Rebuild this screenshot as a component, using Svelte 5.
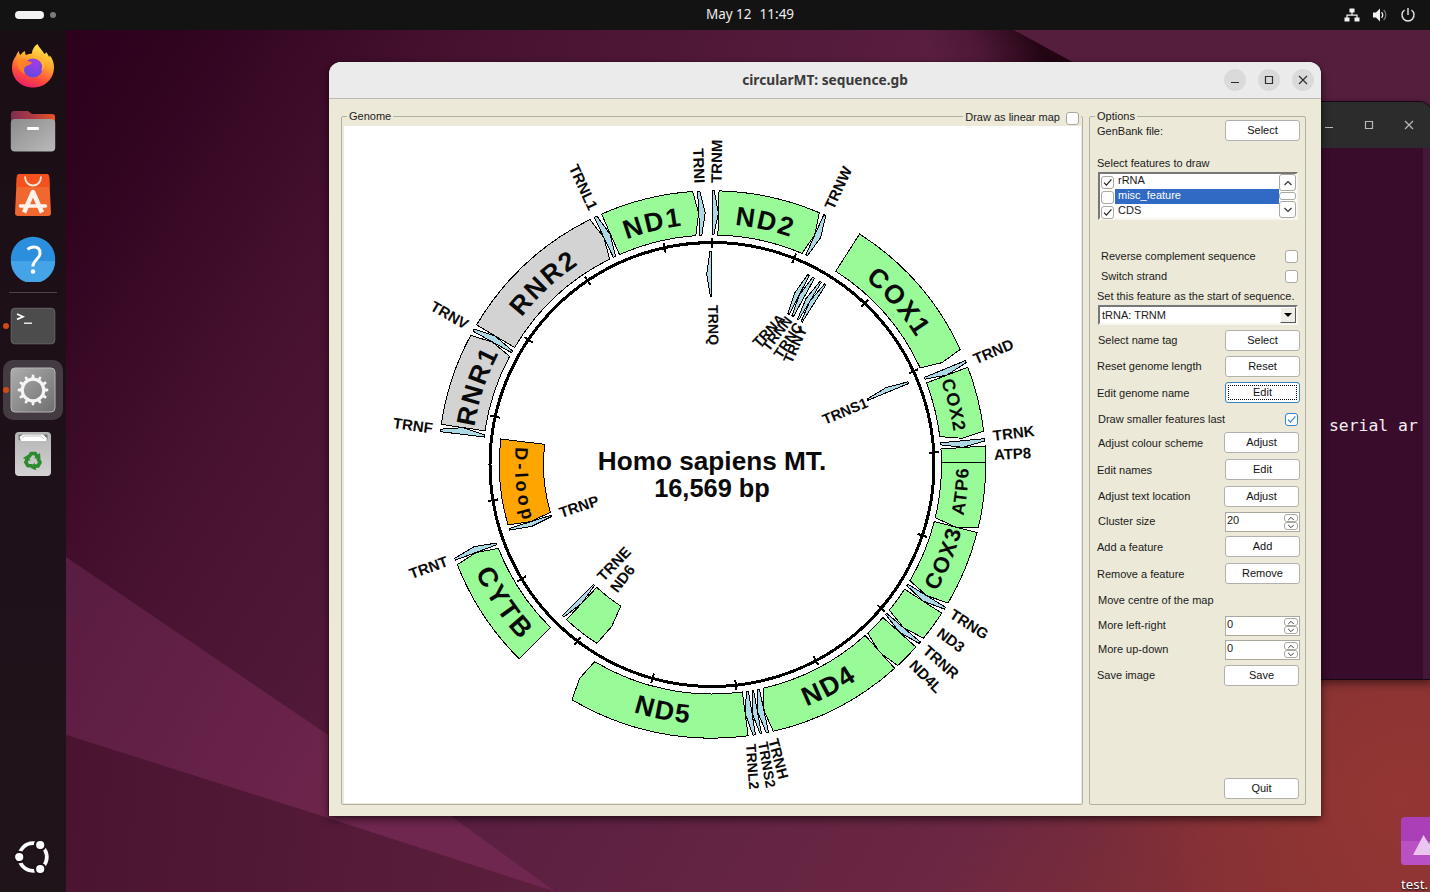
<script>
  const CX = 712, CY = 464.5, TOTAL = 16569, ORIGIN = 4402;
  const TRNA = '#add8e6', CDS = '#98fb98', RRNA = '#d3d3d3', DLOOP = '#ffa500';

  // name, start, end, strand (1 outer / -1 inner), fill, label size (0 = outside label), label overrides
  const features = [
    ['TRNF', 577, 647, 1, TRNA, 0],
    ['RNR1', 648, 1601, 1, RRNA, 26.5],
    ['TRNV', 1602, 1670, 1, TRNA, 0],
    ['RNR2', 1671, 3229, 1, RRNA, 26.5],
    ['TRNL1', 3230, 3304, 1, TRNA, 0],
    ['ND1', 3307, 4262, 1, CDS, 26.5],
    ['TRNI', 4263, 4331, 1, TRNA, 0],
    ['TRNQ', 4329, 4400, -1, TRNA, 0, { x: 713, y: 305, r: 89, f: 14.2 }],
    ['TRNM', 4402, 4469, 1, TRNA, 0, { x: 716.5, y: 183, r: -89, f: 15 }],
    ['ND2', 4470, 5511, 1, CDS, 26.5],
    ['TRNW', 5512, 5579, 1, TRNA, 0],
    ['TRNA', 5587, 5655, -1, TRNA, 0, { x: 782, y: 316, r: -47, f: 14.2 }],
    ['TRNN', 5657, 5729, -1, TRNA, 0, { x: 789, y: 318, r: -52, f: 14.2 }],
    ['TRNC', 5761, 5826, -1, TRNA, 0, { x: 799, y: 324, r: -56, f: 14.2 }],
    ['TRNY', 5826, 5891, -1, TRNA, 0, { x: 803, y: 327, r: -66, f: 14.2 }],
    ['COX1', 5904, 7445, 1, CDS, 26.5],
    ['TRNS1', 7446, 7514, -1, TRNA, 0, { x: 867, y: 402, r: -22.5, f: 14.5 }],
    ['TRND', 7518, 7585, 1, TRNA, 0, { x: 974, y: 360, r: -23, f: 15.2 }],
    ['COX2', 7586, 8269, 1, CDS, 18],
    ['TRNK', 8295, 8364, 1, TRNA, 0, { x: 993, y: 436, r: -7, f: 15 }],
    ['ATP8', 8366, 8572, 1, CDS, 0, { x: 994, y: 455, r: -3, f: 15 }],
    ['ATP6', 8527, 9207, 1, CDS, 18],
    ['COX3', 9207, 9990, 1, CDS, 22],
    ['TRNG', 9991, 10058, 1, TRNA, 0],
    ['ND3', 10059, 10404, 1, CDS, 0],
    ['TRNR', 10405, 10469, 1, TRNA, 0],
    ['ND4L', 10470, 10766, 1, CDS, 0],
    ['ND4', 10760, 12137, 1, CDS, 26.5],
    ['TRNH', 12138, 12206, 1, TRNA, 0, { x: 773, y: 739, r: 75, f: 14.8 }],
    ['TRNS2', 12207, 12265, 1, TRNA, 0, { x: 763, y: 742, r: 80, f: 14.1 }],
    ['TRNL2', 12266, 12336, 1, TRNA, 0, { x: 751, y: 744, r: 86, f: 14.1 }],
    ['ND5', 12337, 14148, 1, CDS, 26.5],
    ['ND6', 14149, 14673, -1, CDS, 0],
    ['TRNE', 14674, 14742, -1, TRNA, 0],
    ['CYTB', 14747, 15887, 1, CDS, 27],
    ['TRNT', 15888, 15953, 1, TRNA, 0],
    ['TRNP', 15956, 16023, -1, TRNA, 0],
    ['D-loop', 16024, 17145, -1, DLOOP, 18]
  ];

  const deg = (bp) => ((((bp - ORIGIN) / TOTAL) * 360) + 720) % 360;
  const pt = (r, a) => {
    const t = (a * Math.PI) / 180;
    return `${(CX + r * Math.sin(t)).toFixed(2)} ${(CY - r * Math.cos(t)).toFixed(2)}`;
  };

  const shapes = features.map(([name, s, e, strand, fill, size, over]) => {
    const a = deg(s);
    const b = a + ((e - s) / TOTAL) * 360;
    const ri = strand > 0 ? 229.5 : 168.5;
    const ro = ri + 44.2;
    const mid = (ri + ro) / 2;
    const d = 1;
    const shape = strand > 0
      ? `M${pt(ri, a)}L${pt(ro, a)}A${ro} ${ro} 0 0 1 ${pt(ro, b - d)}L${pt(mid, b)}L${pt(ri, b - d)}A${ri} ${ri} 0 0 0 ${pt(ri, a)}Z`
      : `M${pt(ri, b)}L${pt(ro, b)}A${ro} ${ro} 0 0 0 ${pt(ro, a + d)}L${pt(mid, a)}L${pt(ri, a + d)}A${ri} ${ri} 0 0 1 ${pt(ri, b)}Z`;
    const m = ((a + b) / 2) % 360;
    const flip = m > 90 && m < 270;
    const tr = (flip ? mid + size * 0.36 : mid - size * 0.36) - (name === 'D-loop' ? 0 : 1.5);
    const c = flip ? m - 0.9 : m - 0.4;
    const arc = flip
      ? `M${pt(tr, c + 40)}A${tr} ${tr} 0 0 0 ${pt(tr, c - 40)}`
      : `M${pt(tr, c - 40)}A${tr} ${tr} 0 0 1 ${pt(tr, c + 40)}`;
    const right = m < 180;
    const [lx, ly] = pt(strand > 0 ? 281.5 : 160, m).split(' ');
    const pos = over ?? { x: lx, y: ly, r: right ? m - 90 : m + 90, f: 15 };
    const anchor = right === strand > 0 ? 'start' : 'end';
    const dy = over ? 5 : !right && strand > 0 ? 6.5 : 3.5;
    return { name, fill, size, shape, arc, pos, anchor, dy };
  });

  const ticks = Array.from({ length: 17 }, (_, i) => (i * 1000 / TOTAL) * 360);

  const options = [
    { label: 'Select name tag', button: 'Select', gap: 5, dx: 1 },
    { label: 'Reset genome length', button: 'Reset', gap: 5 },
    { label: 'Edit genome name', button: 'Edit', gap: 5, focus: true, dy: 1 },
    { label: 'Draw smaller features last', check: true, gap: 6, dx: 1 },
    { label: 'Adjust colour scheme', button: 'Adjust', gap: 2, left: true, dx: 1, dy: 1 },
    { label: 'Edit names', button: 'Edit', gap: 6, dy: 1 },
    { label: 'Adjust text location', button: 'Adjust', gap: 6, left: true, dx: 1 },
    { label: 'Cluster size', spin: '20', gap: 5, dx: 1, dy: -1 },
    { label: 'Add a feature', button: 'Add', gap: 4, dy: 1 },
    { label: 'Remove a feature', button: 'Remove', gap: 6, dy: 1 },
    { label: 'Move centre of the map', gap: 6, dx: 1 },
    { label: 'More left-right', spin: '0', gap: 5, dx: 1, dy: -1 },
    { label: 'More up-down', spin: '0', gap: 4, dx: 1, dy: -1 },
    { label: 'Save image', button: 'Save', gap: 5, left: true }
  ];

  const list = [
    { name: 'rRNA', on: true },
    { name: 'misc_feature', on: false, sel: true },
    { name: 'CDS', on: true }
  ];
  const teeth = Array.from({ length: 12 }, (_, i) => i * 30);
</script>

{#snippet tick(color)}
  <svg width="13" height="13" viewBox="0 0 13 13"><path d="M3 6.6 5.4 9.2 10.4 3.4" fill="none" stroke={color} stroke-width="1.2" /></svg>
{/snippet}

{#snippet controls()}
  <svg width="14" height="14" viewBox="0 0 14 14"><path d="M3 9.5h8" /></svg>
  <svg width="14" height="14" viewBox="0 0 14 14"><path d="M3.500 3.500h7v7h-7z" /></svg>
  <svg width="14" height="14" viewBox="0 0 14 14"><path d="m3 3 8 8m0-8-8 8" /></svg>
{/snippet}

<div class="desktop">
  <svg class="wallpaper" width="1430" height="892" viewBox="0 0 1430 892">
    <defs>
      <linearGradient id="base" x1="0" y1="0" x2="1430" y2="892" gradientUnits="userSpaceOnUse">
        <stop offset="0" stop-color="#2a001a" />
        <stop offset=".1" stop-color="#30031f" />
        <stop offset=".25" stop-color="#47122f" />
        <stop offset=".5" stop-color="#5b1f41" />
        <stop offset=".75" stop-color="#6b2743" />
        <stop offset=".9" stop-color="#86312f" />
        <stop offset="1" stop-color="#9a3b2e" />
      </linearGradient>
      <linearGradient id="facet" x1="66" y1="560" x2="480" y2="800" gradientUnits="userSpaceOnUse">
        <stop offset="0" stop-color="#5a1c42" />
        <stop offset="1" stop-color="#74284f" />
      </linearGradient>
      <linearGradient id="low" x1="66" y1="800" x2="900" y2="892" gradientUnits="userSpaceOnUse">
        <stop offset="0" stop-color="#4a1431" />
        <stop offset="1" stop-color="#692743" />
      </linearGradient>
      <linearGradient id="fold" x1="940" y1="75" x2="1035" y2="35" gradientUnits="userSpaceOnUse">
        <stop offset="0" stop-color="#2a0619" stop-opacity="0" />
        <stop offset=".45" stop-color="#2a0619" stop-opacity=".3" />
        <stop offset="1" stop-color="#230514" />
      </linearGradient>
      <radialGradient id="warm" cx="1400" cy="800" r="380" gradientUnits="userSpaceOnUse">
        <stop offset="0" stop-color="#943633" />
        <stop offset=".5" stop-color="#893235" stop-opacity=".75" />
        <stop offset="1" stop-color="#6b2743" stop-opacity="0" />
      </radialGradient>
    </defs>
    <rect width="1430" height="892" fill="url(#base)" />
    <path d="M900 30H1014L1074 62H900Z" fill="url(#fold)" />
    <path d="M1014 30H1430V110H1160Z" fill="#561e3d" />
    <path d="M66 557 328 735V818L66 735Z" fill="url(#facet)" />
    <path d="M66 735 328 818 556 892H66Z" fill="url(#low)" />
    <path d="M328 816H451L556 892 328 818Z" fill="#6f264f" />
    <rect width="1430" height="892" fill="url(#warm)" />
  </svg>

  <header class="panel">
    <div class="spaces"><i class="pill"></i><i class="dot"></i></div>
    <div class="clock"><span>May 12</span><span>11:49</span></div>
    <div class="status">
      <svg width="16" height="16" viewBox="0 0 16 16"><path d="M5.500 1.500h5v4h-5zM.5 10.500h5v4h-5zM10.500 10.500h5v4h-5z" fill="#f2f2f2" /><path d="M8 5v3M3 11V8.200h10V11" fill="none" stroke="#f2f2f2" stroke-width="1.2" /></svg>
      <svg width="16" height="16" viewBox="0 0 16 16"><path d="M1 5.500h3l4-4v13l-4-4H1z" fill="#f2f2f2" /><path d="M9.500 5.300a3.600 3.600 0 0 1 0 5.400" fill="none" stroke="#f2f2f2" stroke-width="1.3" /><path d="M11.700 3a7 7 0 0 1 0 10" fill="none" stroke="#777" stroke-width="1.3" /></svg>
      <svg width="16" height="16" viewBox="0 0 16 16"><path d="M8 1v7M4.600 3A6 6 0 1 0 11.400 3" fill="none" stroke="#e6e6e6" stroke-width="1.4" /></svg>
    </div>
  </header>

  <nav class="dock">
    <div class="app">
      <svg width="46" height="46" viewBox="0 0 46 46">
        <defs>
          <linearGradient id="fx" x1=".75" y1="0" x2=".35" y2="1"><stop offset="0" stop-color="#fff04c" /><stop offset=".4" stop-color="#ffa72f" /><stop offset=".75" stop-color="#ff4a3d" /><stop offset="1" stop-color="#e91e6b" /></linearGradient>
          <linearGradient id="fy" x1="0" y1="0" x2="1" y2="1"><stop offset="0" stop-color="#ff8e1d" /><stop offset="1" stop-color="#ff6b3a" /></linearGradient>
          <radialGradient id="globe" cx=".6" cy=".2" r=".9"><stop offset="0" stop-color="#a33ae8" /><stop offset="1" stop-color="#5a4be0" /></radialGradient>
        </defs>
        <path d="M6 12C7 9 8 8 9 7c0 2 .5 3 1.500 4 1-2 2.500-3 4.500-4 0 2 .4 3 1 4 2-1 4-1.500 6-1.500 0-4 3-8 5.500-9.500C29 3.500 32 6 34.500 10c1-.2 1.500-1.500 1.500-2 1.500 2 2.500 3 3 5l1-1.500C42.500 15 44 19 44 23 44 35 35 43.500 23 43.500S2 35 2 23.500C2 19 3.500 15 6 12Z" fill="url(#fx)" />
        <circle cx="23" cy="24" r="9.500" fill="url(#globe)" />
        <path d="M8 16c3-1.500 6-1.200 8 .4 2 .5 4 .8 6 2.100-1 2.500-3.500 2.500-6 3.500-2.300 2-2.500 5-1 8-5-2-9-8-7-14Z" fill="url(#fy)" />
        <path d="M21.500 14c4 0 9 1 10.500 6 .5 3-.2 5-1 7 4-3 4.500-8 2.500-11-2-4-7-5-12-2Z" fill="#ffb52e" />
      </svg>
    </div>
    <div class="app">
      <svg width="46" height="46" viewBox="0 0 46 46">
        <defs>
          <linearGradient id="tab"><stop stop-color="#7d2d52" /><stop offset=".5" stop-color="#b03a45" /><stop offset="1" stop-color="#e95420" /></linearGradient>
          <linearGradient id="grey" x1="0" y1="0" x2="1" y2="1"><stop stop-color="#8c8c8c" /><stop offset="1" stop-color="#bababa" /></linearGradient>
        </defs>
        <path d="M1 14V6q0-3 3-3h14l4 3h20q3 0 3 3v8H1Z" fill="url(#tab)" />
        <rect x=".8" y="11" width="44.400" height="32.500" rx="4" fill="url(#grey)" />
        <rect x="17" y="19" width="12" height="3" rx="1.200" fill="#fff" />
      </svg>
    </div>
    <div class="app">
      <svg width="46" height="46" viewBox="0 0 46 46">
        <path d="M10 2h26q3 0 3.200 3l1.800 36q0 3-3 3H8q-3 0-3-3L6.800 5Q7 2 10 2Z" fill="#f0672f" />
        <path d="M10 2h26q3 0 3.200 3l.5 10H6.300l.5-10Q7 2 10 2Z" fill="#f4511e" />
        <path d="M15 4.500c0 12 16 12 16 0" fill="none" stroke="#ffe9dc" stroke-width="1.800" />
        <path d="m14 40.500 9-20.500 9 20.500" fill="none" stroke="#fff3ec" stroke-width="4.500" stroke-linejoin="round" />
        <path d="M10.500 34h25" stroke="#fff3ec" stroke-width="3.500" stroke-linecap="round" />
      </svg>
    </div>
    <div class="app">
      <svg width="46" height="46" viewBox="0 0 46 46">
        <circle cx="23" cy="23" r="22.200" fill="#2b8fdd" /><path d="M.8 25a22.200 22.200 0 0 0 44.400 0Z" fill="#45a3e8" />
        <path d="M17.500 13.500Q20 11 24 11q6 0 6 6 0 3-3 6t-4 6v1.500" fill="none" stroke="#fff" stroke-width="3" /><circle cx="23" cy="35.500" r="2.300" fill="#fff" />
      </svg>
    </div>
    <hr />
    <div class="app run">
      <svg width="46" height="46" viewBox="0 0 46 46">
        <rect x="1.200" y="5.300" width="43.600" height="35.500" rx="3.500" fill="#4c4c4c" stroke="#666" />
        <path d="m7 11 6 2.700-6 2.700" fill="none" stroke="#fff" stroke-width="1.700" /><path d="M14 20.200h8" stroke="#fff" stroke-width="1.300" />
      </svg>
    </div>
    <div class="app run active">
      <svg width="46" height="46" viewBox="0 0 46 46">
        <defs><linearGradient id="gear" x1="0" y1="0" x2="1" y2="1"><stop stop-color="#adadad" /><stop offset="1" stop-color="#6f6f6f" /></linearGradient></defs>
        <rect x="1" y="1" width="44" height="44" rx="4" fill="url(#gear)" stroke="#b5b5b5" />
        <circle cx="23" cy="23" r="10.800" fill="none" stroke="#f5f5f5" stroke-width="3.200" />
        {#each teeth as t}<path d="M23 11V9" stroke="#f5f5f5" stroke-width="2.800" stroke-linecap="round" transform="rotate({t} 23 23)" />{/each}
      </svg>
    </div>
    <div class="app">
      <svg width="46" height="46" viewBox="0 0 46 46">
        <defs><linearGradient id="bin" x1="0" y1="0" x2="0" y2="1"><stop stop-color="#b5b5b5" /><stop offset="1" stop-color="#d2d2d2" /></linearGradient></defs>
        <rect x="5" y="1" width="36" height="44" rx="4" fill="url(#bin)" />
        <path d="M8.500 3.500h29v4q0 2-3 2h-23q-3 0-3-2Z" fill="#777" /><path d="m9.500 6 3.500-2.500h20l4 4-1 2.500H11Z" fill="#fff" /><path d="m12 6.500 3-1.500h16l3 3" fill="none" stroke="#aaa" stroke-width=".7" />
        {#each [0, 120, 240] as t}
          <g transform="rotate({t} 23 29.500)"><path d="M18.500 26.500 21.200 22.500h4l2.300 3.500" fill="none" stroke="#2d8a2d" stroke-width="3.600" /><path d="m24 27.300 6.500.4-.5-6Z" fill="#2d8a2d" /></g>
        {/each}
      </svg>
    </div>
    <div class="launcher">
      <svg width="38" height="38" viewBox="0 0 38 38">
        <circle cx="19" cy="19" r="13.800" fill="none" stroke="#fff" stroke-width="3.800" />
        {#each [[5.2, 19], [26.2, 7], [26.2, 31]] as [x, y]}<circle cx={x} cy={y} r="5.200" fill="#fff" stroke="#1c1018" stroke-width="2.200" />{/each}
      </svg>
    </div>
  </nav>

  <section class="terminal">
    <div class="thead">{@render controls()}</div>
    <div class="tbody"><span>serial ar</span></div>
  </section>

  <div class="file">
    <svg width="48" height="48" viewBox="0 0 48 48"><rect width="48" height="48" rx="4" fill="#ab3fb8" /><path d="M0 24h48v20q0 4-4 4H4q-4 0-4-4Z" fill="#b951c4" /><path d="m12 38 10.500-20L28 27l4-6 10 17Z" fill="#eac5ef" /></svg>
    <span>test.</span>
  </div>

  <main class="window">
    <div class="title">
      <h1>circularMT: sequence.gb</h1>
      <div class="buttons">{@render controls()}</div>
    </div>
    <div class="content">
      <fieldset class="genome">
        <div class="cap"><span>Genome</span><label><em>Draw as linear map</em> <i class="box"></i></label></div>
        <svg class="map" width="737" height="677" viewBox="344 126 737 677">
          <g shape-rendering="crispEdges" stroke="#000">
            <circle cx={CX} cy={CY} r="222" fill="none" stroke-width="3" />
            {#each ticks as t}
              <path d="M{CX} {CY - 217}V{CY - 227}" stroke-width="2" transform="rotate({t} {CX} {CY})" />
            {/each}
            {#each shapes as s}<path d={s.shape} fill={s.fill} stroke-width="1" />{/each}
          </g>
          <g class="names">
            {#each shapes as s, i}
              {#if s.size}
                <path id="arc{i}" d={s.arc} fill="none" />
                <text font-size={s.size} letter-spacing={s.name === 'D-loop' ? 3.4 : s.size < 20 ? 1 : s.name === 'CYTB' ? 2.6 : 1.8} text-anchor="middle"><textPath href="#arc{i}" startOffset="50%">{s.name}</textPath></text>
              {:else}
                <text font-size={s.pos.f} dy={s.dy} text-anchor={s.anchor} transform="translate({s.pos.x} {s.pos.y}) rotate({s.pos.r})">{s.name}</text>
              {/if}
            {/each}
            <text x="712" y="470" font-size="26.200" text-anchor="middle">Homo sapiens MT.</text>
            <text x="712" y="497" font-size="25.400" text-anchor="middle">16,569 bp</text>
          </g>
        </svg>
      </fieldset>

      <fieldset class="opts">
        <div class="cap"><span>Options</span></div>
        <div class="row first"><span>GenBank file:</span><button>Select</button></div>
        <p class="lead">Select features to draw</p>
        <div class="list">
          <ul>
            {#each list as l}
              <li><i class="box">{#if l.on}{@render tick('#222')}{/if}</i><span class:sel={l.sel}>{l.name}</span></li>
            {/each}
          </ul>
          <div class="scroll">
            <b><svg width="10" height="6" viewBox="0 0 10 6"><path d="m1.500 5 3.500-3.500L8.500 5" /></svg></b>
            <em></em>
            <b><svg width="10" height="6" viewBox="0 0 10 6"><path d="M1.500 1 5 4.500 8.500 1" /></svg></b>
          </div>
        </div>
        <div class="row chk a"><span>Reverse complement sequence</span><i class="box"></i></div>
        <div class="row chk"><span>Switch strand</span><i class="box"></i></div>
        <p class="start">Set this feature as the start of sequence.</p>
        <div class="combo"><span>tRNA: TRNM</span><b></b></div>
        {#each options as o}
          <div class="row" class:short={o.spin} style="margin-top:{o.gap}px">
            <span style="padding-left:{o.dx ?? 0}px;margin-top:{(o.dy ?? 0) * 2}px">{o.label}</span>
            {#if o.button}
              <button class:focus={o.focus} class:left={o.left}>{o.button}</button>
            {:else if o.check}
              <i class="box blue">{@render tick('#3584e4')}</i>
            {:else if o.spin}
              <div class="spin"><span>{o.spin}</span><div>
                <b><svg width="8" height="5" viewBox="0 0 10 6"><path d="m1.500 5 3.500-3.500L8.500 5" /></svg></b>
                <b><svg width="8" height="5" viewBox="0 0 10 6"><path d="M1.500 1 5 4.500 8.500 1" /></svg></b>
              </div></div>
            {/if}
          </div>
        {/each}
        <div class="row quit"><span></span><button class="left">Quit</button></div>
      </fieldset>
    </div>
  </main>
</div>

<style>
  :global(body) { margin: 0; overflow: hidden; }
  * { box-sizing: border-box; }
  svg { display: block; flex: none; }
  .desktop { position: relative; width: 1430px; height: 892px; overflow: hidden; font: 11px/13px "Liberation Sans", Arial, sans-serif; color: #1a1a1a; }
  .wallpaper { position: absolute; inset: 0; }
  .panel { position: relative; height: 30px; background: #131313; display: grid; grid-template-columns: 1fr auto 1fr; align-items: center; padding: 0 14px 0 15px; color: #ececec; font: 14px/20px "Noto Sans", sans-serif; z-index: 2; }
  .spaces { display: flex; align-items: center; gap: 6px; }
  .pill { width: 29px; height: 8px; border-radius: 4px; background: #f3f3f3; }
  .dot { width: 6px; height: 6px; border-radius: 50%; background: #7c7c7c; }
  .clock { display: flex; gap: 8px; padding-left: 69px; margin-top: -3px; font-size: 13.5px; }
  .status { display: flex; justify-content: flex-end; gap: 12px; }
  .dock { position: relative; width: 66px; height: 862px; background: linear-gradient(#1a0e15, #1f1119 60%, #20141b); display: flex; flex-direction: column; align-items: center; padding-top: 5px; }
  .app { position: relative; width: 60px; height: 60px; margin: 2px 0; border-radius: 10px; display: flex; align-items: center; justify-content: center; flex: none; }
  .active { background: #443a41; }
  .run::before { content: ""; position: absolute; left: 0; top: 27px; width: 6px; height: 6px; border-radius: 50%; background: #d14b14; }
  hr { width: 48px; height: 1px; border: 0; background: #4d444a; margin: 1px 0; flex: none; }
  .launcher { margin-top: auto; padding-bottom: 16px; }
  .terminal { position: absolute; left: 1000px; top: 101px; width: 432px; height: 579px; border-radius: 12px 12px 0 0; background: #380c2a; border: 1px solid #190613; box-shadow: 0 3px 8px rgba(0,0,0,.5); overflow: hidden; }
  .thead { height: 46px; background: #2c2c2c; display: flex; justify-content: flex-end; align-items: center; gap: 26px; padding-right: 15px; }
  .thead svg, .buttons svg { fill: none; stroke: #b8b8b8; stroke-width: 1.2; }
  .tbody { height: 532px; border-right: 8px solid #441937; padding: 268px 0 0 328px; color: #f4f0f2; font: 16.4px/20px "DejaVu Sans Mono", monospace; white-space: nowrap; }
  .file { position: absolute; left: 1401px; top: 817px; width: 60px; color: #fff; font: 13.3px/20px "Noto Sans", sans-serif; }
  .file span { display: block; width: 29px; margin-top: 9px; text-shadow: 0 1px 2px #000; }
  .window { position: absolute; left: 329px; top: 62px; width: 992px; height: 754px; border-radius: 12px 12px 0 0; background: #ece9d8; box-shadow: 0 3px 9px rgba(0,0,0,.6), 0 0 1px #000; }
  .title { height: 37px; background: #ebebeb; border-bottom: 1px solid #b9b9b5; border-radius: 12px 12px 0 0; display: grid; grid-template-columns: 1fr auto 1fr; align-items: center; }
  h1 { grid-column: 2; margin: 0; font: 700 13.7px/20px "Noto Sans", sans-serif; color: #3a3a3a; }
  .buttons { display: flex; justify-content: flex-end; gap: 12px; padding-right: 7px; }
  .buttons svg { box-sizing: content-box; padding: 4px; border-radius: 50%; background: #dadada; stroke: #2e2e2e; }
  .content { display: flex; gap: 6px; padding: 17px 0 0 12px; }
  fieldset { margin: 0; padding: 0; min-width: 0; border: 1px solid #b2b0a5; border-radius: 2px; }
  .genome { width: 742px; height: 689px; padding: 0 1px 0 2px; }
  .cap { height: 13px; margin-top: -7px; display: flex; justify-content: space-between; }
  .cap span, .cap label { background: #ece9d8; padding: 0 2px; }
  .cap span { margin-left: 3px; }
  .cap label { display: flex; gap: 6px; align-items: center; height: 16px; padding-right: 2px; }
  .cap em { font-style: normal; margin-top: -2px; }
  .cap label .box { margin-right: 0; }
  .map { background: #fff; margin-top: 3px; }
  .names { font-family: "Liberation Sans", Arial, sans-serif; font-weight: 700; fill: #0a0a0a; }
  .opts { width: 217px; height: 689px; padding: 0 5px 0 7px; }
  .opts .cap { height: 10px; }
  .opts .cap span { height: 13px; margin-left: -2px; }
  p { margin: 0; }
  .row { height: 21px; display: flex; justify-content: space-between; align-items: center; white-space: nowrap; }
  .row.short { height: 20px; }
  .first span { margin-top: 2px; }
  button { width: 75px; height: 21px; padding: 0 0 1px; border: 1px solid #b3b1ab; border-radius: 3px; background: #fff; font: 11px/13px "Liberation Sans", Arial, sans-serif; color: #111; }
  button.left { margin-right: 1px; }
  button.focus { border-color: #3584c8; outline: 1px dotted #000; outline-offset: -4px; }
  .box { display: block; width: 13px; height: 13px; flex: none; margin-right: 2px; border: 1px solid #aaa89f; border-radius: 3px; background: #fff; }
  .box svg { margin: -1px; }
  .box.blue { border-color: #3584c8; }
  .lead { margin: 16px 0 2px; }
  .list { width: 200px; height: 48px; border: 2px solid #777; border-right-color: #f7f6f0; border-bottom-color: #f7f6f0; background: #fff; display: flex; margin-left: 1px; }
  ul { margin: 0; padding: 0; list-style: none; flex: 1; }
  li { height: 15px; display: flex; align-items: center; gap: 1px; }
  li .box { margin: 2px 0 0 1px; }
  li span { flex: 1; height: 15px; padding-left: 3px; line-height: 12px; }
  .sel { background: #316ac5; color: #fff; }
  .scroll { width: 17px; display: flex; flex-direction: column; }
  .scroll b { height: 17px; }
  .scroll em { height: 8px; margin: 1px 0; }
  .scroll b, .scroll em, .spin b { border: 1px solid #aaa89f; border-radius: 3px; background: #fff; display: flex; align-items: center; justify-content: center; }
  .scroll svg, .spin svg { fill: none; stroke: #333; stroke-width: 1.2; }
  .chk { height: 20px; padding: 0 2px 0 4px; }
  .chk .box { margin-right: 0; }
  .chk.a { margin-top: 26px; }
  .start { margin: 4px 0 2px; white-space: nowrap; }
  .combo { width: 200px; height: 20px; margin-left: 1px; background: #fff; border: 2px solid #777; border-right-color: #f7f6f0; border-bottom-color: #f7f6f0; display: flex; justify-content: space-between; padding-left: 2px; line-height: 16px; }
  .combo b { width: 16px; background: #eeede8; border: 1px solid; border-color: #fff #555 #555 #fff; display: flex; align-items: center; justify-content: center; }
  .combo b::after { content: ""; border: 4px solid transparent; border-top-color: #000; border-bottom: 0; }
  .spin { width: 75px; height: 20px; border: 1px solid #aaa89f; background: #fff; display: flex; justify-content: space-between; padding: 1px 1px 0 1px; }
  .spin > div { display: flex; flex-direction: column; }
  .spin b { width: 14px; height: 8px; }
  .quit { margin-top: 92px; }
</style>
